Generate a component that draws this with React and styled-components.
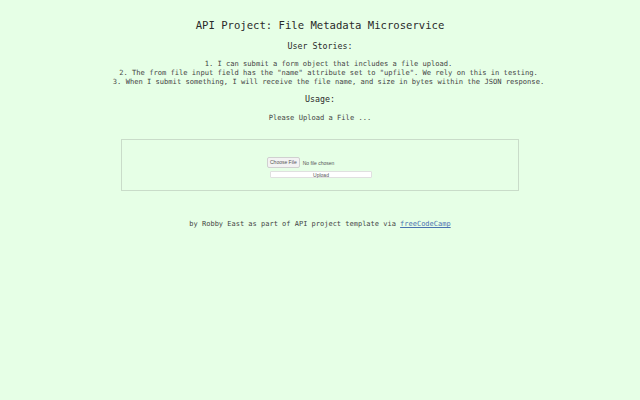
import React from "react";
import styled, { createGlobalStyle } from "styled-components";

const GlobalStyle = createGlobalStyle`
  html, body {
    margin: 0;
    padding: 0;
    background: #e6ffe6;
  }
  body {
    font-family: "DejaVu Sans Mono", "Liberation Mono", monospace;
    color: #333;
  }
`;

const Page = styled.div`
  width: 640px;
  min-height: 400px;
  background: #e6ffe6;
  display: flex;
  flex-direction: column;
  align-items: center;
  text-align: center;
  padding-top: 19px;
  box-sizing: border-box;
`;

const Title = styled.h1`
  margin: 0;
  font-size: 10.6px;
  line-height: 13px;
  font-weight: normal;
  color: #2a2a2a;
`;

const SubTitle = styled.h3`
  margin: ${(p) => p.$top}px 0 0;
  font-size: 8.3px;
  line-height: 10px;
  font-weight: normal;
  color: #2a2a2a;
`;

const Stories = styled.ol`
  margin: 8px 0 0;
  padding: 0 0 0 17px;
  list-style: none;
`;

const Story = styled.li`
  font-size: 7.1px;
  line-height: 9px;
  color: #444;
`;

const Note = styled.p`
  margin: 9px 0 0;
  font-size: 7.1px;
  line-height: 9px;
  color: #444;
`;

const Box = styled.div`
  margin-top: 17px;
  width: 398px;
  height: 52px;
  box-sizing: border-box;
  border: 1px solid #c9dcc9;
  display: flex;
  justify-content: center;
  padding-top: 17px;
`;

const Form = styled.form`
  width: 104px;
  display: flex;
  flex-direction: column;
  align-items: flex-start;
  gap: 3px;
  font-family: "Liberation Sans", Arial, sans-serif;
`;

const FileRow = styled.label`
  display: flex;
  align-items: center;
  gap: 3px;
  margin-left: -1px;
  font-size: 5px;
  color: #555;
`;

const ChooseButton = styled.span`
  display: inline-block;
  padding: 1px 2px;
  height: 7px;
  line-height: 7px;
  background: #f3f3f3;
  border: 0.5px solid #d0d0d0;
  border-radius: 2px;
  color: #555;
`;

const UploadButton = styled.button`
  margin-left: 2px;
  width: 102px;
  height: 7px;
  padding: 0;
  background: #fff;
  border: 0.5px solid #e0e0e0;
  border-radius: 1px;
  font-family: "Liberation Sans", Arial, sans-serif;
  font-size: 5px;
  line-height: 6px;
  color: #555;
`;

const Footer = styled.p`
  margin: 29px 0 0;
  font-size: 7px;
  line-height: 9px;
  color: #444;
`;

const Link = styled.a`
  color: #4a72b0;
  text-decoration: underline;
`;

const stories = [
  "I can submit a form object that includes a file upload.",
  'The from file input field has the "name" attribute set to "upfile". We rely on this in testing.',
  "When I submit something, I will receive the file name, and size in bytes within the JSON response.",
];

const App = () => {
  return (
    <Page>
      <GlobalStyle />
      <Title>API Project: File Metadata Microservice</Title>
      <SubTitle $top={9}>User Stories:</SubTitle>
      <Stories>
        {stories.map((s, i) => (
          <Story key={i}>
            {i + 1}. {s}
          </Story>
        ))}
      </Stories>
      <SubTitle $top={8}>Usage:</SubTitle>
      <Note>Please Upload a File ...</Note>
      <Box>
        <Form onSubmit={(e) => e.preventDefault()}>
          <FileRow>
            <ChooseButton>Choose File</ChooseButton>
            <span>No file chosen</span>
          </FileRow>
          <UploadButton type="submit">Upload</UploadButton>
        </Form>
      </Box>
      <Footer>
        by Robby East as part of API project template via{" "}
        <Link href="#">freeCodeCamp</Link>
      </Footer>
    </Page>
  );
};

export default App;
